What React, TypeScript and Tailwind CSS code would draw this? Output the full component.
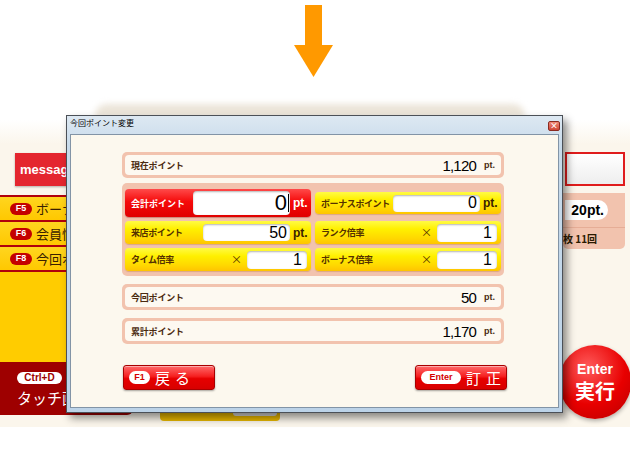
import React from "react";

const NUM = "font-['Liberation_Sans',Arial,sans-serif]";

function CreamRow({ label, value }: { label: string; value: string }) {
  return (
    <div className="w-[382px] h-[26px] rounded-[5px] bg-[#f2c3ae] p-[3px]">
      <div className="h-full rounded-[4px] bg-[#fdf9f1] flex items-center pl-[6px] pr-[6px]">
        <span className="text-[9px] font-bold text-[#4a2a10] leading-none whitespace-nowrap tracking-[-0.2px]">{label}</span>
        <span className={`ml-auto text-[15px] leading-none text-black tracking-[-0.8px] ${NUM}`}>{value}</span>
        <span className={`ml-[8px] text-[9px] font-bold text-[#4a2a10] leading-none ${NUM}`}>pt.</span>
      </div>
    </div>
  );
}

function YellowRow({
  label,
  value,
  kind,
  h,
}: {
  label: string;
  value: string;
  kind: "pt" | "x";
  h: string;
}) {
  return (
    <div
      className={`${h} w-full rounded-[4px] bg-[linear-gradient(#fffb45,#fff000_35%,#ffd800_75%,#ffc400)] shadow-[0_1px_1px_rgba(150,80,0,0.25)] flex items-center pl-[6px] pr-[4px]`}
    >
      <span className="text-[9px] font-bold text-[#553000] leading-none whitespace-nowrap tracking-[-0.4px]">{label}</span>
      {kind === "pt" ? (
        <>
          <div className="ml-auto shrink-0 w-[87px] h-[17px] rounded-[4px] bg-white shadow-[inset_0_1px_2px_rgba(0,0,0,0.3)] flex items-center justify-end pr-[3px]">
            <span className={`text-[16px] leading-none text-black ${NUM}`}>{value}</span>
          </div>
          <span className={`shrink-0 w-[14px] ml-[3px] text-[12px] font-bold text-[#3a2200] leading-none ${NUM}`}>pt.</span>
        </>
      ) : (
        <>
          <span className="ml-auto text-[11px] text-[#553000] leading-none">×</span>
          <div className="ml-[5px] shrink-0 w-[60px] h-[18px] rounded-[4px] bg-white shadow-[inset_0_1px_2px_rgba(0,0,0,0.3)] flex items-center justify-end pr-[5px]">
            <span className={`text-[16px] leading-none text-black ${NUM}`}>{value}</span>
          </div>
        </>
      )}
    </div>
  );
}

function RedButton({ pill, pillW, label }: { pill: string; pillW: string; label: string }) {
  return (
    <div className="w-[92px] h-[25px] rounded-[3px] border border-[#a80000] bg-[linear-gradient(#ff6a6a,#f52020_45%,#e60000_55%,#d80000)] shadow-[0_1px_2px_rgba(0,0,0,0.35),inset_0_1px_0_rgba(255,255,255,0.45)] flex items-center pl-[5px]">
      <span
        className={`${pillW} h-[13px] rounded-full bg-white flex items-center justify-center text-[9px] font-bold text-[#d40000] leading-none ${NUM}`}
      >
        {pill}
      </span>
      <span className="ml-[5px] text-white text-[15px] tracking-[5px] leading-none">{label}</span>
    </div>
  );
}

export default function App() {
  return (
    <div className="relative w-[630px] h-[450px] overflow-hidden bg-white font-['Noto_Sans_CJK_JP','Liberation_Sans',sans-serif]">
      {/* arrow */}
      <div className="pt-[5px] pl-[294px] h-[77px]">
        <svg width="40" height="72" viewBox="0 0 40 72">
          <rect x="11" y="0" width="17" height="41" fill="#ff9900" />
          <polygon points="0,40 39,40 19.5,72" fill="#ff9900" />
        </svg>
      </div>
      <div className="h-[43px]" />

      {/* background app */}
      <div className="h-[307px] flex bg-[linear-gradient(#ffffff,#fbf6ec_24px)]">
        {/* left column */}
        <div className="w-[133px] flex flex-col pt-[33px]">
          <div className="ml-[15px] w-[110px] h-[33px] bg-[#e4262f] shadow-[0_1px_2px_rgba(0,0,0,0.3)] flex items-center pl-[5px]">
            <span className={`text-white text-[13px] font-bold ${NUM}`}>message</span>
          </div>
          <div className="mt-[9px] border-t-2 border-[#b0000c]">
            {[
              ["F5", "ボーナスポイント"],
              ["F6", "会員情報"],
              ["F8", "今回ポイント"],
            ].map(([k, t]) => (
              <div
                key={k}
                className="h-[25px] flex items-center pl-[10px] overflow-hidden bg-[linear-gradient(#ffd51f,#ffc800)] border-b-2 border-[#b0000c]"
              >
                <span className={`shrink-0 w-[22px] h-[12px] rounded-full bg-[#c40000] flex items-center justify-center text-white text-[9px] font-bold leading-none ${NUM}`}>
                  {k}
                </span>
                <span className="ml-[4px] text-[13px] text-[#3a2000] leading-none whitespace-nowrap">{t}</span>
              </div>
            ))}
          </div>
          <div className="flex-1 bg-[#ffcc00]" />
          <div className="h-[53px] bg-[#9e0000] rounded-br-[6px] pl-[17px] pt-[10px] overflow-hidden">
            <div className={`w-[45px] h-[12px] rounded-full bg-white flex items-center justify-center text-[#9e0000] text-[10px] font-bold leading-none ${NUM}`}>
              Ctrl+D
            </div>
            <div className="mt-[6px] text-white text-[15px] leading-none whitespace-nowrap">タッチ画面</div>
          </div>
          <div className="h-[12px]" />
        </div>

        {/* middle column */}
        <div className="flex-1 flex flex-col justify-end pb-[6px]">
          <div className="ml-[27px] w-[120px] h-[10px] rounded-b-[4px] bg-[#e9b800] flex justify-end pr-[3px]">
            <div className="w-[44px] h-[5px] rounded-b-[3px] bg-[#d9d9d9]" />
          </div>
        </div>

        {/* right column */}
        <div className="w-[67px] flex flex-col pt-[32px]">
          <div className="ml-[2px] w-[60px] h-[34px] border-2 border-[#e01c1c] bg-[linear-gradient(#ffffff,#eeeeee)]" />
          <div className="mt-[7px] w-[62px] h-[56px] rounded-b-[5px] bg-[#f2c3ae] flex flex-col">
            <div className="h-[34px] flex items-center pl-[2px]">
              <div className="w-[43px] h-[20px] rounded-r-full bg-white flex items-center justify-end pr-[4px]">
                <span className={`text-[14px] font-bold text-black leading-none ${NUM}`}>20pt.</span>
              </div>
            </div>
            <div className="h-px bg-[#e6ad96]" />
            <div className="flex-1 flex items-center">
              <span className="text-[10px] font-bold text-[#2a1a00] leading-none whitespace-nowrap">枚 11回</span>
            </div>
          </div>
          <div className="mt-[96px] ml-[-4px] w-[72px] h-[74px] rounded-full bg-[radial-gradient(circle_at_40%_30%,#ff5a5a,#e80000_55%,#b80000)] shadow-[0_2px_4px_rgba(0,0,0,0.3)] flex flex-col items-center justify-center gap-[6px]">
            <span className={`text-white text-[14px] font-bold leading-[12px] ${NUM}`}>Enter</span>
            <span className="text-white text-[20px] font-bold leading-[20px]">実行</span>
          </div>
        </div>
      </div>

      {/* blurred glass above dialog */}
      <div className="absolute left-[95px] top-[104px] w-[430px] h-[14px] rounded-t-[12px] bg-[#ebe4d8] blur-[3px]" />

      {/* dialog */}
      <div className="absolute left-[66px] top-[115px] w-[497px] h-[298px] border border-[#4b5057] bg-[linear-gradient(#dde8f2,#c8dbeb_30px,#bcd3e8)] shadow-[4px_5px_8px_rgba(0,0,0,0.45)] flex flex-col">
        <div className="h-[18px] flex items-start justify-between pl-[3px] pr-[2px]">
          <span className="mt-[3px] text-[8px] text-black leading-none">今回ポイント変更</span>
          <div className="mt-[5px] w-[12px] h-[10px] rounded-[2px] border border-[#8b2a20] bg-[linear-gradient(#ef8a78,#cf4535)] flex items-center justify-center">
            <span className="text-white text-[8px] leading-none font-bold">×</span>
          </div>
        </div>
        <div className="flex-1 mx-[3px] mb-[4px] border border-[#8294a6] bg-[#fcf8ee] pl-[51px] pt-[17px]">
          <CreamRow label="現在ポイント" value="1,120" />

          {/* group */}
          <div className="mt-[5px] w-[382px] rounded-[5px] bg-[#f2c3ae] px-[3px] pt-[6px] pb-[5px] grid grid-cols-2 gap-x-[4px] gap-y-[4px]">
            {/* red row */}
            <div className="h-[28px] rounded-[4px] bg-[linear-gradient(#ff4a4a,#f50a0a_45%,#e00000)] shadow-[0_1px_1px_rgba(120,0,0,0.3)] flex items-center pl-[6px] pr-[4px]">
              <span className="text-[9px] font-bold text-white leading-none whitespace-nowrap">会計ポイント</span>
              <div className="ml-auto shrink-0 w-[97px] h-[24px] rounded-[4px] bg-white shadow-[inset_0_1px_2px_rgba(0,0,0,0.3)] flex items-center justify-end pr-[1px]">
                <span className={`text-[22px] leading-none text-black ${NUM}`}>0</span>
                <span className="ml-px w-px h-[18px] bg-black" />
              </div>
              <span className={`shrink-0 w-[14px] ml-[3px] text-[12px] font-bold text-white leading-none ${NUM}`}>pt.</span>
            </div>
            <div className="self-center">
              <YellowRow label="ボーナスポイント" value="0" kind="pt" h="h-[22px]" />
            </div>
            <YellowRow label="来店ポイント" value="50" kind="pt" h="h-[23px]" />
            <YellowRow label="ランク倍率" value="1" kind="x" h="h-[23px]" />
            <YellowRow label="タイム倍率" value="1" kind="x" h="h-[23px]" />
            <YellowRow label="ボーナス倍率" value="1" kind="x" h="h-[23px]" />
          </div>

          <div className="mt-[8px]">
            <CreamRow label="今回ポイント" value="50" />
          </div>
          <div className="mt-[8px]">
            <CreamRow label="累計ポイント" value="1,170" />
          </div>

          <div className="mt-[21px] ml-px w-[384px] flex justify-between">
            <RedButton pill="F1" pillW="w-[21px]" label="戻る" />
            <RedButton pill="Enter" pillW="w-[40px]" label="訂正" />
          </div>
        </div>
      </div>
    </div>
  );
}
